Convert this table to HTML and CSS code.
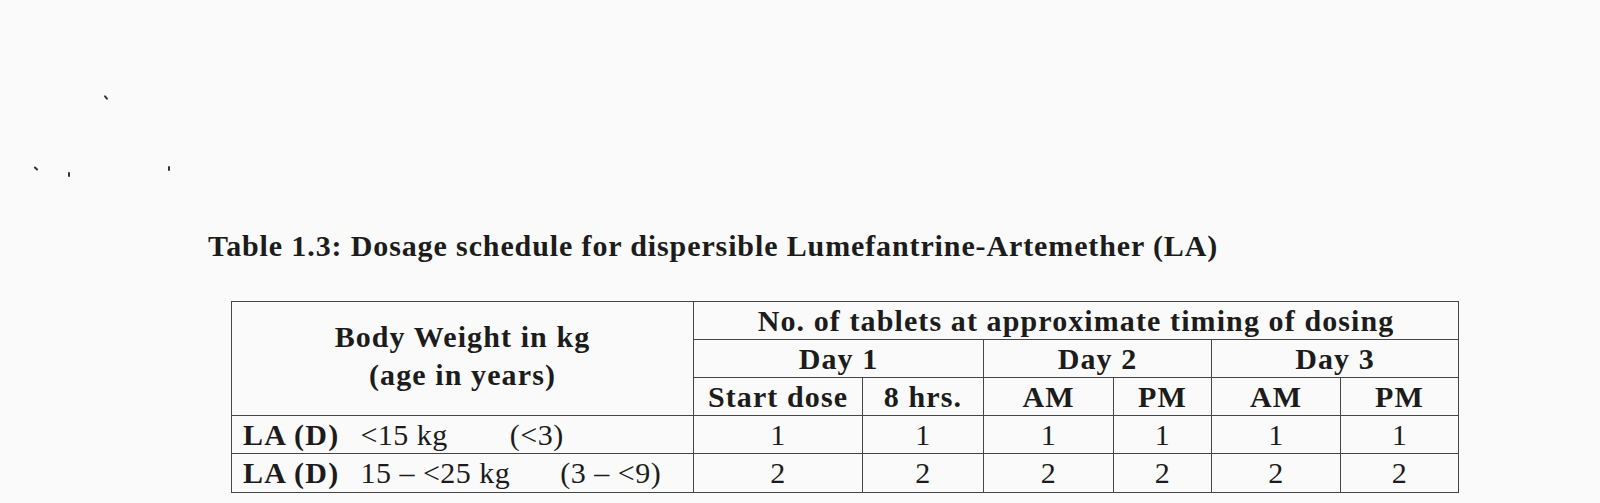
FILE: index.html
```html
<!DOCTYPE html>
<html>
<head>
<meta charset="utf-8">
<link rel="stylesheet" href="styles.css">
</head>
<body>
<div class="page">
  <span class="speck s1"></span>
  <span class="speck s2"></span>
  <span class="speck s3"></span>
  <span class="speck s4"></span>
  <h1 class="title">Table 1.3: Dosage schedule for dispersible Lumefantrine-Artemether (LA)</h1>
  <table class="dose">
    <colgroup>
      <col class="c0"><col class="c1"><col class="c2"><col class="c3"><col class="c4"><col class="c5"><col class="c6">
    </colgroup>
    <thead>
      <tr>
        <th rowspan="3" class="weight">Body Weight in kg<br>(age in years)</th>
        <th colspan="6">No. of tablets at approximate timing of dosing</th>
      </tr>
      <tr>
        <th colspan="2">Day 1</th>
        <th colspan="2">Day 2</th>
        <th colspan="2">Day 3</th>
      </tr>
      <tr>
        <th>Start dose</th>
        <th>8 hrs.</th>
        <th>AM</th>
        <th>PM</th>
        <th>AM</th>
        <th>PM</th>
      </tr>
    </thead>
    <tbody>
      <tr>
        <td class="label"><b>LA (D)</b>&nbsp; &lt;15 kg<span class="gap1"></span>(&lt;3)</td>
        <td>1</td><td>1</td><td>1</td><td>1</td><td>1</td><td>1</td>
      </tr>
      <tr class="last">
        <td class="label"><b>LA (D)</b>&nbsp; 15 – &lt;25 kg<span class="gap2"></span>(3 – &lt;9)</td>
        <td>2</td><td>2</td><td>2</td><td>2</td><td>2</td><td>2</td>
      </tr>
    </tbody>
  </table>
</div>
</body>
</html>
```

FILE: styles.css
```css
html, body {
  margin: 0;
  padding: 0;
  background: #fafafa;
}
.page {
  position: relative;
  width: 1600px;
  height: 503px;
  padding-top: 229px;
  box-sizing: border-box;
  font-family: "Liberation Serif", "Times New Roman", serif;
  color: #1c1c1c;
}
.title {
  margin: 0 0 0 208px;
  font-size: 30px;
  font-weight: bold;
  line-height: 34px;
  letter-spacing: 0.88px;
}
.dose {
  margin: 38px 0 0 231px;
  border-collapse: collapse;
  width: 1227px;
  table-layout: fixed;
  font-size: 30px;
}
.c0 { width: 462px; }
.c1 { width: 169px; }
.c2 { width: 121px; }
.c3 { width: 130px; }
.c4 { width: 98px; }
.c5 { width: 129px; }
.c6 { width: 118px; }
.dose th, .dose td {
  border: 1.5px solid #454545;
  height: 37px;
  padding: 0;
  text-align: center;
  line-height: 36px;
  white-space: nowrap;
}
.dose tr.last td {
  height: 38px;
}
.dose th {
  font-weight: bold;
  letter-spacing: 1.1px;
}
.dose th.weight {
  line-height: 38px;
  padding-bottom: 6px;
}
.dose td {
  font-weight: normal;
  letter-spacing: 0.5px;
}
.dose td.label {
  text-align: left;
  padding-left: 11px;
}
.dose td.label b {
  letter-spacing: 1.2px;
  margin-right: 5px;
}
.gap1 { display: inline-block; width: 62px; }
.gap2 { display: inline-block; width: 50px; }
.speck {
  position: absolute;
  width: 2px;
  height: 5px;
  background: #333;
  border-radius: 1px;
}
.s1 { left: 105px; top: 95px; transform: rotate(-40deg); }
.s2 { left: 35px; top: 166px; transform: rotate(-45deg); }
.s3 { left: 68px; top: 172px; }
.s4 { left: 168px; top: 166px; }
```
